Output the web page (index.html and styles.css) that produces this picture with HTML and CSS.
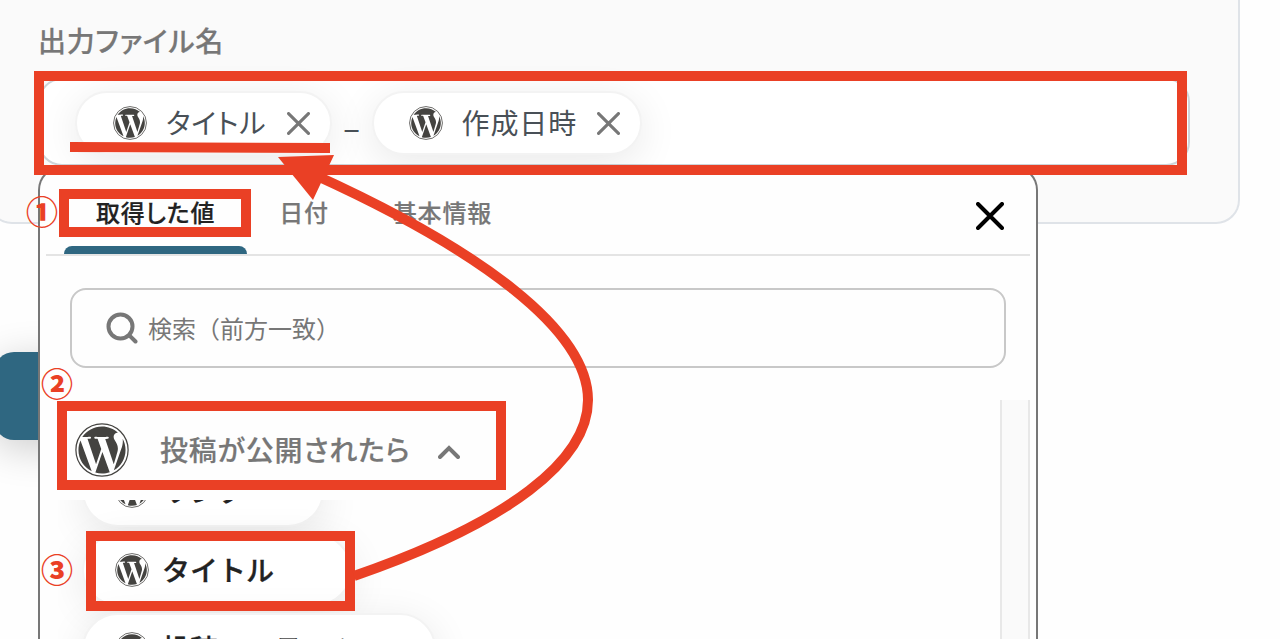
FILE: index.html
```html
<!DOCTYPE html>
<html lang="ja">
<head>
<meta charset="UTF-8">
<meta name="viewport" content="width=device-width, initial-scale=1.0">
<title>出力ファイル名</title>
<link rel="stylesheet" href="styles.css">
</head>
<body>
<!-- WordPress logo, shared by every chip -->
<svg class="defs" width="0" height="0">
  <symbol id="wp" viewBox="0 0 24 24">
    <circle cx="12" cy="12" r="11.6" fill="none" stroke="currentColor" stroke-width="0.55"/>
    <path fill="currentColor" transform="translate(0.36 0.36) scale(0.97)" d="M21.469 6.825c.84 1.537 1.318 3.3 1.318 5.175 0 3.979-2.156 7.456-5.363 9.325l3.295-9.527c.615-1.54.82-2.771.82-3.864 0-.405-.026-.78-.07-1.11m-7.981.105c.647-.03 1.232-.105 1.232-.105.582-.075.514-.93-.067-.899 0 0-1.755.135-2.88.135-1.064 0-2.85-.15-2.85-.15-.585-.03-.661.855-.075.885 0 0 .54.061 1.125.09l1.68 4.605-2.37 7.08L5.354 6.9c.649-.03 1.234-.1 1.234-.1.585-.075.516-.93-.065-.896 0 0-1.746.138-2.874.138-.2 0-.438-.008-.69-.015C4.911 3.15 8.235 1.215 12 1.215c2.809 0 5.365 1.072 7.286 2.833-.046-.003-.091-.009-.141-.009-1.06 0-1.812.923-1.812 1.914 0 .89.513 1.643 1.06 2.531.411.72.89 1.643.89 2.977 0 .915-.354 1.994-.821 3.479l-1.075 3.585-3.9-11.61zM12 22.784c-1.059 0-2.081-.153-3.048-.437l3.237-9.406 3.315 9.087c.024.053.05.101.078.149-1.12.393-2.325.609-3.582.609M1.211 12c0-1.564.336-3.05.935-4.39L7.29 21.709C3.694 19.96 1.212 16.271 1.211 12"/>
  </symbol>
</svg>

<div class="card">
  <div class="label">出力ファイル名</div>
  <div class="field">
    <div class="chip">
      <svg class="wp"><use href="#wp"/></svg>
      <span class="chip-text">タイトル</span>
      <svg class="remove" viewBox="0 0 22 22"><path d="M1.5 1.5l19 19M20.5 1.5l-19 19"/></svg>
    </div>
    <span class="sep">_</span>
    <div class="chip">
      <svg class="wp"><use href="#wp"/></svg>
      <span class="chip-text">作成日時</span>
      <svg class="remove" viewBox="0 0 22 22"><path d="M1.5 1.5l19 19M20.5 1.5l-19 19"/></svg>
    </div>
  </div>
</div>
<div class="button"></div>

<div class="popup">
  <div class="tabs">
    <div class="tab active">取得した値</div>
    <div class="tab">日付</div>
    <div class="tab">基本情報</div>
    <svg class="close" viewBox="0 0 28 28"><path d="M2 2l24 24M26 2L2 26"/></svg>
  </div>
  <div class="search">
    <svg viewBox="0 0 32 32"><circle cx="14.5" cy="14.5" r="12"/><path d="M23.3 23.3L29.5 29.5"/></svg>
    <span>検索（前方一致）</span>
  </div>
  <div class="results">
    <div class="main">
      <div class="group">
        <svg class="wp big"><use href="#wp"/></svg>
        <span>投稿が公開されたら</span>
        <svg class="chevron" viewBox="0 0 22 14"><path d="M2 12l9-9 9 9"/></svg>
      </div>
      <div class="list">
        <div class="item"><svg class="wp"><use href="#wp"/></svg><span>リンク</span></div>
        <div class="item"><svg class="wp"><use href="#wp"/></svg><span>タイトル</span></div>
        <div class="item"><svg class="wp"><use href="#wp"/></svg><span>投稿コンテンツ</span></div>
      </div>
    </div>
    <div class="scrollbar"></div>
  </div>
</div>

<!-- Red step marks drawn over the screen -->
<svg class="marks" viewBox="0 0 1280 639">
  <g class="line">
    <rect x="39" y="76" width="1143" height="94"/>
    <path d="M70 147L330 148"/>
    <rect x="64" y="194" width="182" height="38"/>
    <rect x="62" y="406" width="439" height="79"/>
    <rect x="91" y="536" width="259" height="70"/>
    <path d="M354 576C510 522 588 460 588 400C588 330 480 250 315 175"/>
  </g>
  <path class="head" d="M278 157L334 155L313 200Z"/>
  <g class="step">
    <text x="42" y="224">①</text>
    <text x="57" y="396">②</text>
    <text x="57" y="582">③</text>
  </g>
</svg>
</body>
</html>
```

FILE: styles.css
```css
body {
  margin: 0;
  height: 639px;
  overflow: hidden;
  position: relative;
  background: #fefefe;
  color: #777;
  font-family: "Noto Sans CJK JP", sans-serif;
}
.defs {
  position: absolute;
}
.card {
  box-sizing: border-box;
  width: 1252px;
  height: 224px;
  margin-left: -12px;
  padding: 19px 48px 0;
  background: #fafafa;
  border: 2px solid #dfe3e8;
  border-top: 0;
  border-radius: 0 0 24px 24px;
}
.label {
  height: 59px;
  line-height: 42px;
  font-size: 28px;
  font-weight: 500;
  letter-spacing: 0.7px;
  font-feature-settings: "palt";
  -webkit-text-stroke: 0.2px;
}
.field {
  box-sizing: border-box;
  display: flex;
  align-items: center;
  height: 88px;
  padding: 2px 35px 0;
  background: #fff;
  border: 2px solid #cdd4d9;
  border-radius: 24px;
}
.chip {
  box-sizing: border-box;
  display: flex;
  align-items: center;
  height: 64px;
  padding: 0 20px 0 35px;
  background: #fff;
  border: 2px solid #f3f3f3;
  border-radius: 32px;
  box-shadow: 0 8px 40px rgba(0, 0, 0, 0.09);
}
.wp {
  width: 34px;
  height: 34px;
  flex: none;
  color: #444340;
}
.chip-text {
  margin: -3px 20px 0 19px;
  font-size: 28px;
  letter-spacing: 0.9px;
  line-height: 40px;
  color: #495057;
  font-feature-settings: "palt";
}
.chip:first-child {
  padding-left: 36px;
}
.remove {
  width: 23px;
  height: 23px;
  fill: none;
  stroke: #777;
  stroke-width: 3;
  stroke-linecap: round;
}
.sep {
  width: 40px;
  margin-top: -12px;
  text-align: center;
  font-size: 26px;
  font-weight: 500;
  line-height: 40px;
  color: #495057;
}
.button {
  width: 180px;
  height: 88px;
  margin: 128px 0 0 -6px;
  background: #2f6781;
  border-radius: 20px;
  box-shadow: 0 8px 40px rgba(0, 0, 0, 0.2);
}

/* value picker */
.popup {
  box-sizing: border-box;
  position: absolute;
  left: 38px;
  top: 166px;
  width: 1000px;
  height: 473px;
  padding: 0 6px;
  background: #fefefe;
  border: 2px solid #777;
  border-bottom: 0;
  border-radius: 24px 24px 0 0;
}
.tabs {
  box-sizing: border-box;
  display: flex;
  height: 88px;
  padding: 0 26px 0 18px;
  border-bottom: 2px solid #e4e4e4;
}
.tab {
  position: relative;
  padding: 0 32px;
  font-size: 24px;
  font-weight: 500;
  letter-spacing: 0.8px;
  line-height: 88px;
  font-feature-settings: "palt";
  -webkit-text-stroke: 0.2px;
}
.tab.active {
  color: #222;
}
.tab.active::after {
  content: "";
  position: absolute;
  left: 0;
  right: 0;
  bottom: 0;
  height: 8px;
  background: #2f6781;
  border-radius: 8px 8px 0 0;
}
.close {
  width: 28px;
  height: 28px;
  margin: 34px 0 0 auto;
  fill: none;
  stroke: #000;
  stroke-width: 4;
  stroke-linecap: round;
}
.search {
  box-sizing: border-box;
  display: flex;
  align-items: center;
  gap: 10px;
  height: 80px;
  margin: 32px 24px;
  padding: 0 34px;
  border: 2px solid #c8c8c8;
  border-radius: 16px;
  font-size: 24px;
}
.search span {
  margin-top: -2px;
}
.search svg {
  width: 32px;
  height: 32px;
  fill: none;
  stroke: #777;
  stroke-width: 4;
  stroke-linecap: round;
}
.results {
  display: flex;
  height: 239px;
}
.main {
  flex: 1;
  padding-left: 12px;
}
.group {
  display: flex;
  align-items: center;
  height: 100px;
  padding-left: 17px;
  font-size: 28px;
  font-weight: 500;
  letter-spacing: 0.8px;
  font-feature-settings: "palt";
  -webkit-text-stroke: 0.2px;
}
.group span {
  margin: -3px 27px 0 31px;
}
.wp.big {
  width: 54px;
  height: 54px;
}
.chevron {
  width: 22px;
  height: 14px;
  margin-top: 4px;
  fill: none;
  stroke: #777;
  stroke-width: 4;
  stroke-linecap: round;
}
.list {
  display: flex;
  flex-direction: column;
  align-items: flex-start;
  gap: 7px;
  height: 139px;
  padding-left: 24px;
  overflow: hidden;
}
.item {
  box-sizing: border-box;
  display: flex;
  align-items: center;
  gap: 13px;
  flex: none;
  height: 72px;
  padding: 0 76px 0 31px;
  background: #fff;
  border: 2px solid #f3f3f3;
  border-radius: 36px;
  box-shadow: 0 8px 40px rgba(0, 0, 0, 0.09);
  color: #222;
  font-size: 28px;
  font-weight: 500;
  -webkit-text-stroke: 0.3px;
}
.item span {
  margin-top: -2px;
}
/* the list is scrolled part of the way down */
.item:first-child {
  margin-top: -45px;
}
.scrollbar {
  box-sizing: border-box;
  width: 30px;
  background: #fafafa;
  border: solid #e8e8e8;
  border-width: 0 2px;
}

.marks {
  position: absolute;
  left: 0;
  top: 0;
  width: 1280px;
  height: 639px;
}
.line {
  fill: none;
  stroke: #ea4025;
  stroke-width: 10;
}
.head {
  fill: #ea4025;
}
.step {
  fill: #ea4025;
  font-size: 32px;
  font-weight: 900;
  text-anchor: middle;
}
```
